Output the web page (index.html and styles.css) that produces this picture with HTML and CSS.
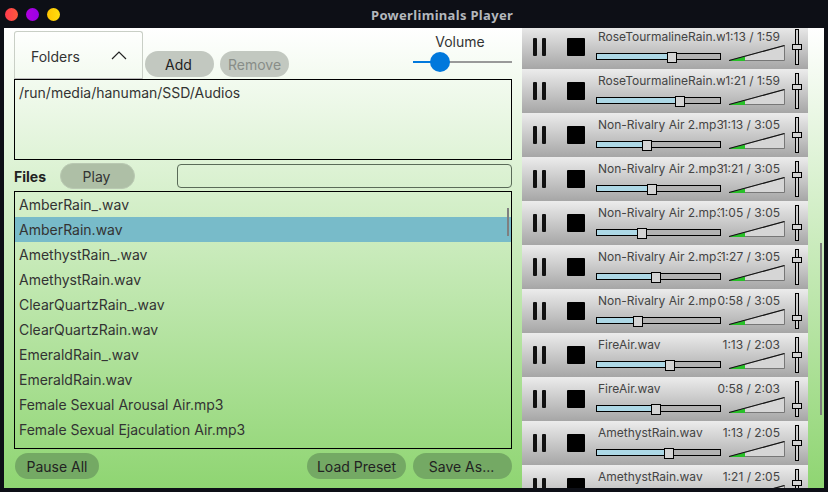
FILE: index.html
```html
<!DOCTYPE html>
<html lang="en">
<head>
<meta charset="utf-8">
<title>Powerliminals Player</title>
<link rel="stylesheet" href="styles.css">
</head>
<body>
<svg class="defs" width="0" height="0" aria-hidden="true">
  <symbol id="tri" viewBox="0 0 56 16">
    <path d="M0.5 15.5 L55.5 0.5 V15.5 Z" fill="#d6d6d6" stroke="#777" stroke-width="1"/>
    <path d="M0 15.8 L16 11.4 V16 H0 Z" fill="#28c028"/>
    <path d="M0 15.5 L55.5 0.5" fill="none" stroke="#111" stroke-width="1.1"/>
  </symbol>
</svg>
<div class="window">
  <header class="titlebar">
    <div class="lights"><span class="light red"></span><span class="light purple"></span><span class="light yellow"></span></div>
    <div class="title">Powerliminals Player</div>
  </header>
  <main class="content">
    <section class="left">
      <div class="top-row">
        <div class="folders-tab"><span class="folders-text">Folders</span>
          <svg class="chev" width="16" height="9" viewBox="0 0 16 9"><path d="M1 8 L8 1 L15 8" fill="none" stroke="#222" stroke-width="1.2"/></svg>
        </div>
        <button class="pill light-pill add">Add</button>
        <button class="pill light-pill remove">Remove</button>
        <div class="volume">
          <div class="volume-label">Volume</div>
          <div class="h-slider"><span class="h-fill"></span><span class="h-knob"></span></div>
        </div>
      </div>
      <div class="folder-box">/run/media/hanuman/SSD/Audios</div>
      <div class="files-row">
        <strong class="files-label">Files</strong>
        <button class="pill play">Play</button>
        <div class="search"></div>
      </div>
      <div class="file-list">
        <div class="file">AmberRain_.wav</div>
        <div class="file selected">AmberRain.wav</div>
        <div class="file">AmethystRain_.wav</div>
        <div class="file">AmethystRain.wav</div>
        <div class="file">ClearQuartzRain_.wav</div>
        <div class="file">ClearQuartzRain.wav</div>
        <div class="file">EmeraldRain_.wav</div>
        <div class="file">EmeraldRain.wav</div>
        <div class="file">Female Sexual Arousal Air.mp3</div>
        <div class="file">Female Sexual Ejaculation Air.mp3</div>
        <span class="list-scroll"></span>
      </div>
      <div class="bottom-row">
        <button class="pill dark-pill pause-all">Pause All</button>
        <span class="spacer"></span>
        <button class="pill dark-pill load">Load Preset</button>
        <button class="pill dark-pill save">Save As...</button>
      </div>
    </section>
    <section class="right">
      <div class="track-stack">
        <div class="track"><div class="pause"><i></i><i></i></div><div class="stop"></div>
          <div class="track-main"><div class="track-text"><span class="name">RoseTourmalineRain.wav</span><span class="time">1:13 / 1:59</span></div>
            <div class="track-controls"><div class="seek"><span class="seek-fill" style="width:70px"></span><span class="seek-knob" style="left:70px"></span></div><svg class="tri" width="56" height="16"><use href="#tri"/></svg></div></div>
          <div class="vslider"><span class="v-knob" style="top:14px"></span></div></div>
        <div class="track"><div class="pause"><i></i><i></i></div><div class="stop"></div>
          <div class="track-main"><div class="track-text"><span class="name">RoseTourmalineRain.wav</span><span class="time">1:21 / 1:59</span></div>
            <div class="track-controls"><div class="seek"><span class="seek-fill" style="width:78px"></span><span class="seek-knob" style="left:78px"></span></div><svg class="tri" width="56" height="16"><use href="#tri"/></svg></div></div>
          <div class="vslider"><span class="v-knob" style="top:10px"></span></div></div>
        <div class="track"><div class="pause"><i></i><i></i></div><div class="stop"></div>
          <div class="track-main"><div class="track-text"><span class="name">Non-Rivalry Air 2.mp3</span><span class="time">1:13 / 3:05</span></div>
            <div class="track-controls"><div class="seek"><span class="seek-fill" style="width:45px"></span><span class="seek-knob" style="left:45px"></span></div><svg class="tri" width="56" height="16"><use href="#tri"/></svg></div></div>
          <div class="vslider"><span class="v-knob" style="top:14px"></span></div></div>
        <div class="track"><div class="pause"><i></i><i></i></div><div class="stop"></div>
          <div class="track-main"><div class="track-text"><span class="name">Non-Rivalry Air 2.mp3</span><span class="time">1:21 / 3:05</span></div>
            <div class="track-controls"><div class="seek"><span class="seek-fill" style="width:50px"></span><span class="seek-knob" style="left:50px"></span></div><svg class="tri" width="56" height="16"><use href="#tri"/></svg></div></div>
          <div class="vslider"><span class="v-knob" style="top:10px"></span></div></div>
        <div class="track"><div class="pause"><i></i><i></i></div><div class="stop"></div>
          <div class="track-main"><div class="track-text"><span class="name">Non-Rivalry Air 2.mp3</span><span class="time">1:05 / 3:05</span></div>
            <div class="track-controls"><div class="seek"><span class="seek-fill" style="width:40px"></span><span class="seek-knob" style="left:40px"></span></div><svg class="tri" width="56" height="16"><use href="#tri"/></svg></div></div>
          <div class="vslider"><span class="v-knob" style="top:18px"></span></div></div>
        <div class="track"><div class="pause"><i></i><i></i></div><div class="stop"></div>
          <div class="track-main"><div class="track-text"><span class="name">Non-Rivalry Air 2.mp3</span><span class="time">1:27 / 3:05</span></div>
            <div class="track-controls"><div class="seek"><span class="seek-fill" style="width:54px"></span><span class="seek-knob" style="left:54px"></span></div><svg class="tri" width="56" height="16"><use href="#tri"/></svg></div></div>
          <div class="vslider"><span class="v-knob" style="top:7px"></span></div></div>
        <div class="track"><div class="pause"><i></i><i></i></div><div class="stop"></div>
          <div class="track-main"><div class="track-text"><span class="name">Non-Rivalry Air 2.mp3</span><span class="time">0:58 / 3:05</span></div>
            <div class="track-controls"><div class="seek"><span class="seek-fill" style="width:36px"></span><span class="seek-knob" style="left:36px"></span></div><svg class="tri" width="56" height="16"><use href="#tri"/></svg></div></div>
          <div class="vslider"><span class="v-knob" style="top:21px"></span></div></div>
        <div class="track"><div class="pause"><i></i><i></i></div><div class="stop"></div>
          <div class="track-main"><div class="track-text"><span class="name">FireAir.wav</span><span class="time">1:13 / 2:03</span></div>
            <div class="track-controls"><div class="seek"><span class="seek-fill" style="width:68px"></span><span class="seek-knob" style="left:68px"></span></div><svg class="tri" width="56" height="16"><use href="#tri"/></svg></div></div>
          <div class="vslider"><span class="v-knob" style="top:14px"></span></div></div>
        <div class="track"><div class="pause"><i></i><i></i></div><div class="stop"></div>
          <div class="track-main"><div class="track-text"><span class="name">FireAir.wav</span><span class="time">0:58 / 2:03</span></div>
            <div class="track-controls"><div class="seek"><span class="seek-fill" style="width:54px"></span><span class="seek-knob" style="left:54px"></span></div><svg class="tri" width="56" height="16"><use href="#tri"/></svg></div></div>
          <div class="vslider"><span class="v-knob" style="top:21px"></span></div></div>
        <div class="track"><div class="pause"><i></i><i></i></div><div class="stop"></div>
          <div class="track-main"><div class="track-text"><span class="name">AmethystRain.wav</span><span class="time">1:13 / 2:05</span></div>
            <div class="track-controls"><div class="seek"><span class="seek-fill" style="width:67px"></span><span class="seek-knob" style="left:67px"></span></div><svg class="tri" width="56" height="16"><use href="#tri"/></svg></div></div>
          <div class="vslider"><span class="v-knob" style="top:14px"></span></div></div>
        <div class="track"><div class="pause"><i></i><i></i></div><div class="stop"></div>
          <div class="track-main"><div class="track-text"><span class="name">AmethystRain.wav</span><span class="time">1:21 / 2:05</span></div>
            <div class="track-controls"><div class="seek"><span class="seek-fill" style="width:71px"></span><span class="seek-knob" style="left:71px"></span></div><svg class="tri" width="56" height="16"><use href="#tri"/></svg></div></div>
          <div class="vslider"><span class="v-knob" style="top:10px"></span></div></div>
      </div>
    </section>
    <span class="panel-scroll"></span>
  </main>
</div>
</body>
</html>
```

FILE: styles.css
```css
* { box-sizing: border-box; }
html, body { margin: 0; height: 100%; }
body { background: #0d0f16; font-family: Inter, "Liberation Sans", sans-serif; color: #222; overflow: hidden; }
.defs { position: absolute; }
.window { width: 828px; height: 492px; display: flex; flex-direction: column; background: #0d0f16; }
.titlebar { height: 28px; flex: none; position: relative; display: flex; align-items: center; }
.lights { display: flex; gap: 8px; padding: 1px 0 0 5px; }
.light { width: 13px; height: 13px; border-radius: 50%; }
.red { background: linear-gradient(90deg, #ff3b4e, #ff5a3c); }
.purple { background: linear-gradient(90deg, #b000e0, #9a00e8); }
.yellow { background: linear-gradient(90deg, #ffc400, #ffdd10); }
.title { position: absolute; left: 371px; top: 7px; font: 700 13px/17px "Noto Sans", sans-serif; letter-spacing: 0.32px; color: #b4b8bd; }
.content { position: relative; flex: none; width: 820px; height: 460px; margin-left: 4px; display: flex; background: linear-gradient(180deg, #ffffff 0%, #8fd572 100%); overflow: hidden; }
.left { width: 518px; flex: none; padding: 3px 10px 0 10px; font-size: 14px; display: flex; flex-direction: column; }
.top-row { height: 48px; display: flex; align-items: flex-end; position: relative; flex: none; }
.folders-tab { width: 129px; height: 48px; border: 1px solid #c9cfc6; border-bottom-color: #bbb; border-radius: 3px 3px 0 0; display: flex; align-items: center; justify-content: space-between; padding: 0 15px 0 16px; color: #333; }
.folders-text { padding-top: 2px; }
.chev { display: block; }
.pill { border: 0; border-radius: 13px; font: 14px Inter, sans-serif; height: 26px; padding: 0; color: #222; }
.light-pill { background: #c2c8c0; margin-bottom: 2px; }
.add { width: 69px; margin-left: 2px; padding-right: 2px; }
.remove { width: 69px; margin-left: 6px; color: #888d88; }
.volume { position: absolute; left: 399px; top: 2px; width: 99px; text-align: center; }
.volume-label { font-size: 14px; line-height: 17px; color: #333; margin-right: 5px; }
.h-slider { position: relative; height: 20px; margin-top: 2px; }
.h-slider::before { content: ""; position: absolute; left: 0; right: 0; top: 9px; height: 2px; background: #999; }
.h-fill { position: absolute; left: 0; width: 27px; top: 9px; height: 2px; background: #0078dc; }
.h-knob { position: absolute; left: 17px; top: 0; width: 20px; height: 20px; border-radius: 50%; background: #0078dc; }
.folder-box { height: 81px; flex: none; border: 1px solid #000; padding: 4px; line-height: 17px; color: #333; }
.files-row { height: 31px; flex: none; display: flex; align-items: flex-start; padding-top: 3px; }
.files-label { width: 46px; font-size: 14px; line-height: 28px; color: #222; }
.play { width: 75px; background: #aebfa6; height: 26px; color: #333; border: 1px solid #b9c9b2; padding-right: 2px; }
.search { width: 335px; height: 24px; margin: 1px 0 0 42px; border: 1px solid #5a6b58; border-radius: 4px; }
.file-list { position: relative; height: 258px; flex: none; border: 1px solid #000; overflow: hidden; }
.file { height: 25px; line-height: 25px; padding-left: 4px; color: #333; }
.selected { background: #78bbc9; }
.list-scroll { position: absolute; right: 2px; top: 16px; width: 2px; height: 28px; background: #7f7f7f; }
.bottom-row { display: flex; flex: none; padding-top: 4px; gap: 7px; }
.dark-pill { background: #74a964; }
.pause-all { width: 84px; margin-left: 1px; }
.spacer { flex: 1; }
.load { width: 99px; }
.save { width: 99px; padding-right: 2px; }
.right { width: 286px; flex: none; overflow: hidden; }
.track-stack { margin-top: -3px; }
.track { height: 44px; display: flex; align-items: flex-start; background: linear-gradient(180deg, #ececec 0%, #a6a6a6 100%); }
.pause { display: flex; gap: 5px; margin: 13px 0 0 11px; width: 34px; }
.pause i { width: 4px; height: 18px; background: #111; border-radius: 1px; }
.stop { width: 18px; height: 18px; background: #000; margin-top: 13px; border-radius: 1px; flex: none; }
.track-main { width: 189px; margin-left: 11px; flex: none; }
.track-text { display: flex; height: 20px; font-size: 12px; line-height: 15px; color: #444; padding: 4px 5px 0 2px; }
.name { flex: 1; min-width: 0; overflow: hidden; white-space: nowrap; }
.time { flex: none; }
.track-controls { display: flex; align-items: flex-start; }
.seek { position: relative; width: 125px; height: 7px; border: 1px solid #000; background: #b3b3b3; margin-top: 8px; flex: none; }
.seek-fill { position: absolute; left: 0; top: 0; bottom: 0; background: #add8e6; }
.seek-knob { position: absolute; top: -2px; width: 10px; height: 11px; border: 1px solid #000; background: #d4d4d4; }
.tri { margin-left: 8px; flex: none; }
.vslider { position: relative; width: 4px; height: 36px; border: 1px solid #000; background: #d0d0d0; margin: 4px 0 0 10px; flex: none; }
.v-knob { position: absolute; left: -4px; width: 10px; height: 6px; border: 1px solid #000; background: #d4d4d4; }
.panel-scroll { position: absolute; left: 816px; top: 215px; width: 2px; height: 172px; background: #7d7d7d; }
```
